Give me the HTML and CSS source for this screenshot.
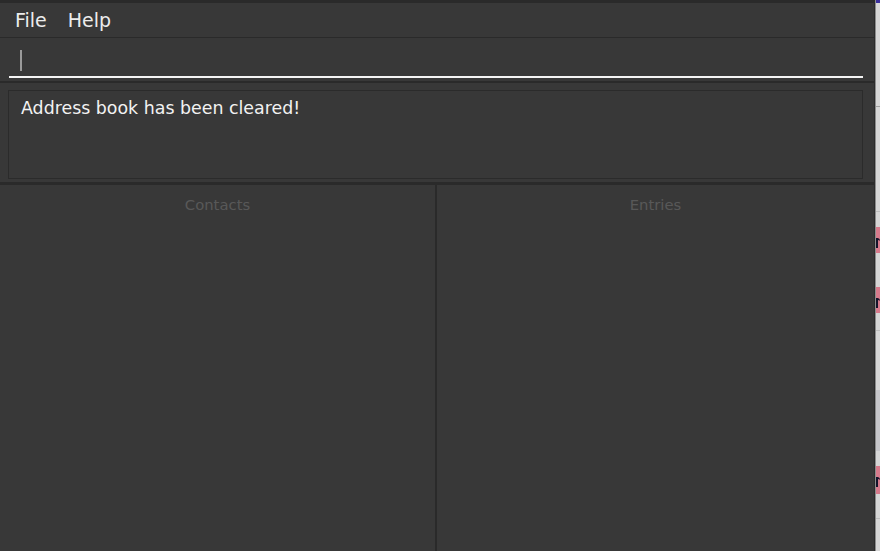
FILE: index.html
```html
<!DOCTYPE html>
<html>
<head>
<meta charset="utf-8">
<link rel="stylesheet" href="styles.css">
</head>
<body>
<div class="screen">
  <div class="app">
    <div class="menubar">
      <span class="menu-item">File</span>
      <span class="menu-item">Help</span>
    </div>
    <div class="command-pane">
      <div class="command-field"><span class="caret"></span></div>
    </div>
    <div class="result-pane">
      <div class="result-box">Address book has been cleared!</div>
    </div>
    <div class="lists">
      <div class="list-panel contacts">
        <div class="list-title">Contacts</div>
      </div>
      <div class="list-panel entries">
        <div class="list-title">Entries</div>
      </div>
    </div>
  </div>
  <div class="edge"></div>
  <div class="desktop">
    <div class="d-purple"></div>
    <div class="d-gap h103"></div>
    <div class="d-line"></div>
    <div class="d-gap h104"></div>
    <div class="d-line light"></div>
    <div class="d-gap h15"></div>
    <div class="d-pink h26"><span class="glyph"></span></div>
    <div class="d-gap h34"></div>
    <div class="d-pink h26"><span class="glyph"></span></div>
    <div class="d-gap h17"></div>
    <div class="d-line light"></div>
    <div class="d-gap h59"></div>
    <div class="d-dark h61"></div>
    <div class="d-gap h15"></div>
    <div class="d-pink h28"><span class="glyph"></span></div>
    <div class="d-gap h24"></div>
    <div class="d-line light"></div>
    <div class="d-gap h30"></div>
  </div>
</div>
</body>
</html>
```
FILE: styles.css
```css
* { box-sizing: border-box; }
html, body {
  margin: 0;
  padding: 0;
  width: 880px;
  height: 551px;
  overflow: hidden;
  background: #d6d6d6;
  font-family: "DejaVu Sans", "Liberation Sans", sans-serif;
}
.screen {
  display: flex;
  width: 880px;
  height: 551px;
}
.app {
  width: 875px;
  height: 551px;
  background: #383838;
  display: flex;
  flex-direction: column;
  border-top: 3px solid #2a2a2a;
  border-right: 1px solid #2c2c2c;
}
.menubar {
  height: 35px;
  flex: none;
  display: flex;
  align-items: center;
  padding-left: 15px;
  gap: 21px;
  border-bottom: 1px solid #2a2a2a;
  color: #ececec;
  font-size: 19px;
}
.menu-item { line-height: 22px; padding-bottom: 1px; }
.command-pane {
  height: 45px;
  flex: none;
  padding: 0 11px 0 9px;
  border-bottom: 2px solid #2a2a2a;
}
.command-field {
  margin-top: 12px;
  height: 28px;
  border-bottom: 2px solid #f4f4f4;
  padding-left: 11px;
}
.caret {
  display: block;
  width: 2px;
  height: 21px;
  background: #9a9a9a;
}
.result-pane {
  height: 102px;
  flex: none;
  padding: 7px 11px 0 8px;
  border-bottom: 3px solid #2a2a2a;
}
.result-box {
  height: 89px;
  border: 1px solid #2b2b2b;
  color: #f2f2f2;
  font-size: 17.4px;
  padding: 5px 0 0 12px;
  line-height: 24px;
}
.lists {
  flex: 1;
  display: flex;
}
.list-panel {
  display: flex;
  flex-direction: column;
  align-items: center;
}
.contacts {
  width: 437px;
  border-right: 2px solid #2a2a2a;
}
.entries {
  flex: 1;
}
.list-title {
  margin-top: 11px;
  color: #585858;
  font-size: 14.8px;
  line-height: 18px;
}
.edge {
  width: 1px;
  height: 551px;
  background: #8c8c8c;
}
.desktop {
  width: 4px;
  height: 551px;
  display: flex;
  flex-direction: column;
  overflow: hidden;
}
.d-purple { height: 3px; background: #3b2f9c; }
.d-gap { background: #d6d6d6; }
.d-line { height: 1px; background: #a0a0a0; }
.d-line.light { background: #bdbdbd; }
.d-pink {
  background: #d77a8c;
  padding: 11px 0 0 0;
}
.glyph {
  display: block;
  width: 4px;
  height: 10px;
  border-left: 2px solid #14142a;
  border-top: 2px solid #14142a;
  border-top-right-radius: 3px;
}
.d-dark { background: #c6c6ca; }
.h15 { height: 15px; }
.h17 { height: 17px; }
.h24 { height: 24px; }
.h26 { height: 26px; }
.h28 { height: 28px; }
.h30 { height: 30px; }
.h34 { height: 34px; }
.h59 { height: 59px; }
.h61 { height: 61px; }
.h103 { height: 103px; }
.h104 { height: 104px; }
```
